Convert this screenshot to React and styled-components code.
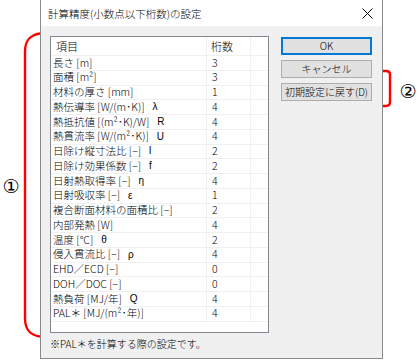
import styled, { createGlobalStyle } from 'styled-components';

// data
const ROWS = [
  { label: '長さ [m]', digits: 3 },
  { label: '面積 [m²]', digits: 3 },
  { label: '材料の厚さ [mm]', digits: 1 },
  { label: '熱伝導率 [W/(m･K)]', symbol: 'λ', digits: 4 },
  { label: '熱抵抗値 [(m²･K)/W]', symbol: 'R', digits: 4 },
  { label: '熱貫流率 [W/(m²･K)]', symbol: 'U', digits: 4 },
  { label: '日除け縦寸法比 [−]', symbol: 'l', digits: 2 },
  { label: '日除け効果係数 [−]', symbol: 'f', digits: 2 },
  { label: '日射熱取得率 [−]', symbol: 'η', digits: 4 },
  { label: '日射吸収率 [−]', symbol: 'ε', digits: 1 },
  { label: '複合断面材料の面積比 [−]', digits: 2 },
  { label: '内部発熱 [W]', digits: 4 },
  { label: '温度 [°C]', symbol: 'θ', digits: 2 },
  { label: '侵入貫流比 [−]', symbol: 'ρ', digits: 4 },
  { label: 'EHD／ECD [−]', digits: 0 },
  { label: 'DOH／DOC [−]', digits: 0 },
  { label: '熱負荷 [MJ/年]', symbol: 'Q', digits: 4 },
  { label: 'PAL＊ [MJ/(m²･年)]', digits: 4 },
];

// styles
const GlobalStyle = createGlobalStyle`
  html, body {
    margin: 0;
    padding: 0;
    background: #ffffff;
  }
  body {
    font-family: "Noto Sans CJK JP", "Noto Sans", sans-serif;
    font-weight: 300;
    color: #000000;
  }
`;

const StyledPage = styled.div`
  display: flex;
  width: 418px;
  height: 360px;
  overflow: hidden;
`;

const StyledLeftNote = styled.div`
  display: flex;
  width: 40px;
  flex-shrink: 0;
`;

const StyledCircled = styled.span`
  display: flex;
  align-items: center;
  justify-content: center;
  width: ${({ $width }) => $width}px;
  height: ${({ $height }) => $height}px;
  margin-top: ${({ $top }) => $top}px;
  font-family: "DejaVu Sans", sans-serif;
  font-weight: 400;
  font-size: 19px;
  line-height: 1;
  color: #000000;
`;

const StyledDialog = styled.div`
  display: flex;
  flex-direction: column;
  width: 343px;
  height: 359px;
  box-sizing: border-box;
  flex-shrink: 0;
  border: 1px solid #8a8a8a;
  border-top: none;
  background: #f0f0f0;
`;

const StyledTitleBar = styled.div`
  display: flex;
  align-items: center;
  justify-content: space-between;
  height: 26px;
  padding: 0 9px 0 7px;
  background: #ffffff;
  font-size: 10.5px;
`;

const StyledClose = styled.svg`
  display: block;
`;

const StyledBody = styled.div`
  display: flex;
  flex-direction: column;
  flex: 1;
  padding: 10px 9px 0 9px;
`;

const StyledMain = styled.div`
  display: flex;
  gap: 12px;
`;

const StyledTable = styled.div`
  width: 219px;
  height: 297px;
  box-sizing: border-box;
  border: 1px solid #828790;
  background: #ffffff;
  font-size: 10.5px;
`;

const StyledRow = styled.div`
  display: grid;
  grid-template-columns: 156px 44px 1fr;
  height: ${({ $header }) => ($header ? '19px' : '14.75px')};
  box-sizing: border-box;
  border-bottom: 1px solid #f0f0f0;
`;

const StyledCell = styled.div`
  display: flex;
  align-items: center;
  padding-left: ${({ $pad }) => $pad}px;
  border-right: ${({ $last }) => ($last ? 'none' : '1px solid #f0f0f0')};
  white-space: nowrap;
  overflow: hidden;
  line-height: 1;
  font-size: ${({ $header }) => ($header ? '11px' : '10.5px')};
`;

const StyledSymbol = styled.span`
  margin-left: 8px;
  font-family: "Liberation Sans", sans-serif;
  font-weight: 400;
  font-size: 10px;
`;

const StyledButtons = styled.div`
  display: flex;
  flex-direction: column;
  gap: 5px;
  padding-top: 1px;
`;

const StyledButton = styled.button`
  width: 91px;
  height: 18px;
  box-sizing: border-box;
  padding: 0;
  border: ${({ $default }) => ($default ? '2px solid #0078d7' : '1px solid #adadad')};
  background: #e1e1e1;
  font-family: "Noto Sans CJK JP", sans-serif;
  font-weight: 300;
  font-size: 10px;
  line-height: 1;
  color: #000000;
`;

const StyledFootnote = styled.div`
  padding-top: 4px;
  font-size: 10px;
  line-height: 14px;
`;

const StyledRightNote = styled.div`
  display: flex;
  flex-shrink: 0;
  gap: 6px;
`;

const Bracket = ({ width, height, d }) => (
  <svg width={width} height={height} viewBox={`0 0 ${width} ${height}`}>
    <path d={d} fill="none" stroke="#ff0000" strokeWidth="2.4" />
  </svg>
);

const App = () => {
  return (
    <>
      <GlobalStyle />
      <StyledPage>
        <StyledLeftNote>
          <StyledCircled $width={22} $height={20} $top={176}>
            ①
          </StyledCircled>
          <Bracket width={18} height={360} d="M18 33.5 C 8 35, 3 40, 3 52 L 3 318 C 3 330, 8 335, 18 336.5" />
        </StyledLeftNote>

        <StyledDialog>
          <StyledTitleBar>
            <span>計算精度(小数点以下桁数)の設定</span>
            <StyledClose width="11" height="11" viewBox="0 0 11 11">
              <path d="M0.5 0.5 L10.5 10.5 M10.5 0.5 L0.5 10.5" stroke="#000000" strokeWidth="1" />
            </StyledClose>
          </StyledTitleBar>

          <StyledBody>
            <StyledMain>
              <StyledTable>
                <StyledRow $header>
                  <StyledCell $pad={5} $header>項目</StyledCell>
                  <StyledCell $pad={4} $header>桁数</StyledCell>
                  <StyledCell $last />
                </StyledRow>
                {ROWS.map((row) => (
                  <StyledRow key={row.label}>
                    <StyledCell $pad={2}>
                      {row.label}
                      {row.symbol && <StyledSymbol>{row.symbol}</StyledSymbol>}
                    </StyledCell>
                    <StyledCell $pad={5}>{row.digits}</StyledCell>
                    <StyledCell $last />
                  </StyledRow>
                ))}
              </StyledTable>

              <StyledButtons>
                <StyledButton $default>OK</StyledButton>
                <StyledButton>キャンセル</StyledButton>
                <StyledButton>初期設定に戻す(D)</StyledButton>
              </StyledButtons>
            </StyledMain>

            <StyledFootnote>※PAL＊を計算する際の設定です。</StyledFootnote>
          </StyledBody>
        </StyledDialog>

        <StyledRightNote>
          <Bracket width={9} height={110} d="M0 71 L 3 71 C 6 71, 7 72, 7 75 L 7 102 C 7 105, 6 106, 3 106 L 0 106" />
          <StyledCircled $width={20} $height={20} $top={81}>
            ②
          </StyledCircled>
        </StyledRightNote>
      </StyledPage>
    </>
  );
};

export default App;
